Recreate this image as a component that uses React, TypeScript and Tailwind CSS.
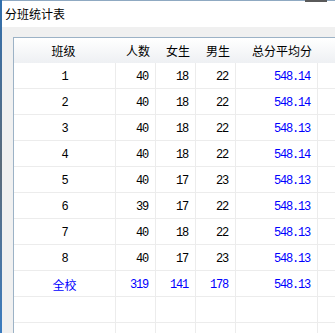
const cjk = "font-[family-name:'Noto_Sans_CJK_SC','Noto_Sans',sans-serif]"
const mono = "font-[family-name:'Liberation_Mono','DejaVu_Sans_Mono',monospace] tracking-[-1.2px]"

type Row = { name: string; total: number; girls: number; boys: number; avg: string; all?: boolean }

const rows: Row[] = [
  { name: '1', total: 40, girls: 18, boys: 22, avg: '548.14' },
  { name: '2', total: 40, girls: 18, boys: 22, avg: '548.14' },
  { name: '3', total: 40, girls: 18, boys: 22, avg: '548.13' },
  { name: '4', total: 40, girls: 18, boys: 22, avg: '548.14' },
  { name: '5', total: 40, girls: 17, boys: 23, avg: '548.13' },
  { name: '6', total: 39, girls: 17, boys: 22, avg: '548.13' },
  { name: '7', total: 40, girls: 18, boys: 22, avg: '548.13' },
  { name: '8', total: 40, girls: 17, boys: 23, avg: '548.13' },
  { name: '全校', total: 319, girls: 141, boys: 178, avg: '548.13', all: true },
]

function DataRow({ row }: { row?: Row }) {
  const num = `${mono} text-[12px] flex items-center justify-end pr-[7px] pt-[2px] border-r border-[#ececec]`
  const tone = row?.all ? 'text-[#0000ff]' : 'text-black'
  return (
    <div className="flex h-[26px] shrink-0 border-b border-[#ececec]">
      <div
        className={`w-[102px] shrink-0 flex items-center justify-center pt-[2px] border-r border-[#ececec] text-[12px] ${
          row?.all ? `${cjk} text-[#0000ff]` : `${mono} text-black`
        }`}
      >
        {row?.name}
      </div>
      <div className={`w-[40px] shrink-0 ${num} ${tone}`}>{row?.total}</div>
      <div className={`w-[40px] shrink-0 ${num} ${tone}`}>{row?.girls}</div>
      <div className={`w-[40px] shrink-0 ${num} ${tone}`}>{row?.boys}</div>
      <div className={`w-[82px] shrink-0 ${num} text-[#0000ff]`}>{row?.avg}</div>
      <div className="flex-1" />
    </div>
  )
}

export default function App() {
  const head = `${cjk} text-[12px] text-black flex items-center justify-end pr-[6px] shrink-0`
  return (
    <div className="w-[335px] h-[333px] overflow-hidden flex bg-white">
      <div className="w-[2px] shrink-0 bg-gradient-to-b from-[#2f6fae] via-[#5b6b7a] to-[#3a7cc0]" />
      <div className="flex-1 flex flex-col min-w-0">
        <div className="relative h-[27px] shrink-0 bg-white border-t border-[#8fa9c2] flex items-center pl-[3px]">
          <div className="absolute top-[-1px] left-[303px] w-[22px] h-[2px] bg-[#5a5a5a]" />
          <span className={`${cjk} text-[12px] text-black leading-none`}>分班统计表</span>
        </div>
        <div className="flex-1 bg-[#f0f0f0] pl-[11px] pt-[10px] min-h-0">
          <div className="h-full bg-white border-l border-t border-[#9cb2c6] flex flex-col overflow-hidden">
            <div className="flex h-[25px] shrink-0 bg-gradient-to-b from-white to-[#eef0f3]">
              <div className={`${cjk} text-[12px] text-black w-[102px] shrink-0 flex items-center justify-center pr-[3px]`}>
                班级
              </div>
              <div className={`${head} w-[40px]`}>人数</div>
              <div className={`${head} w-[40px]`}>女生</div>
              <div className={`${head} w-[40px]`}>男生</div>
              <div className={`${head} w-[82px]`}>总分平均分</div>
              <div className="flex-1" />
            </div>
            {rows.map((r) => (
              <DataRow key={r.name} row={r} />
            ))}
            <DataRow />
            <DataRow />
          </div>
        </div>
      </div>
    </div>
  )
}
